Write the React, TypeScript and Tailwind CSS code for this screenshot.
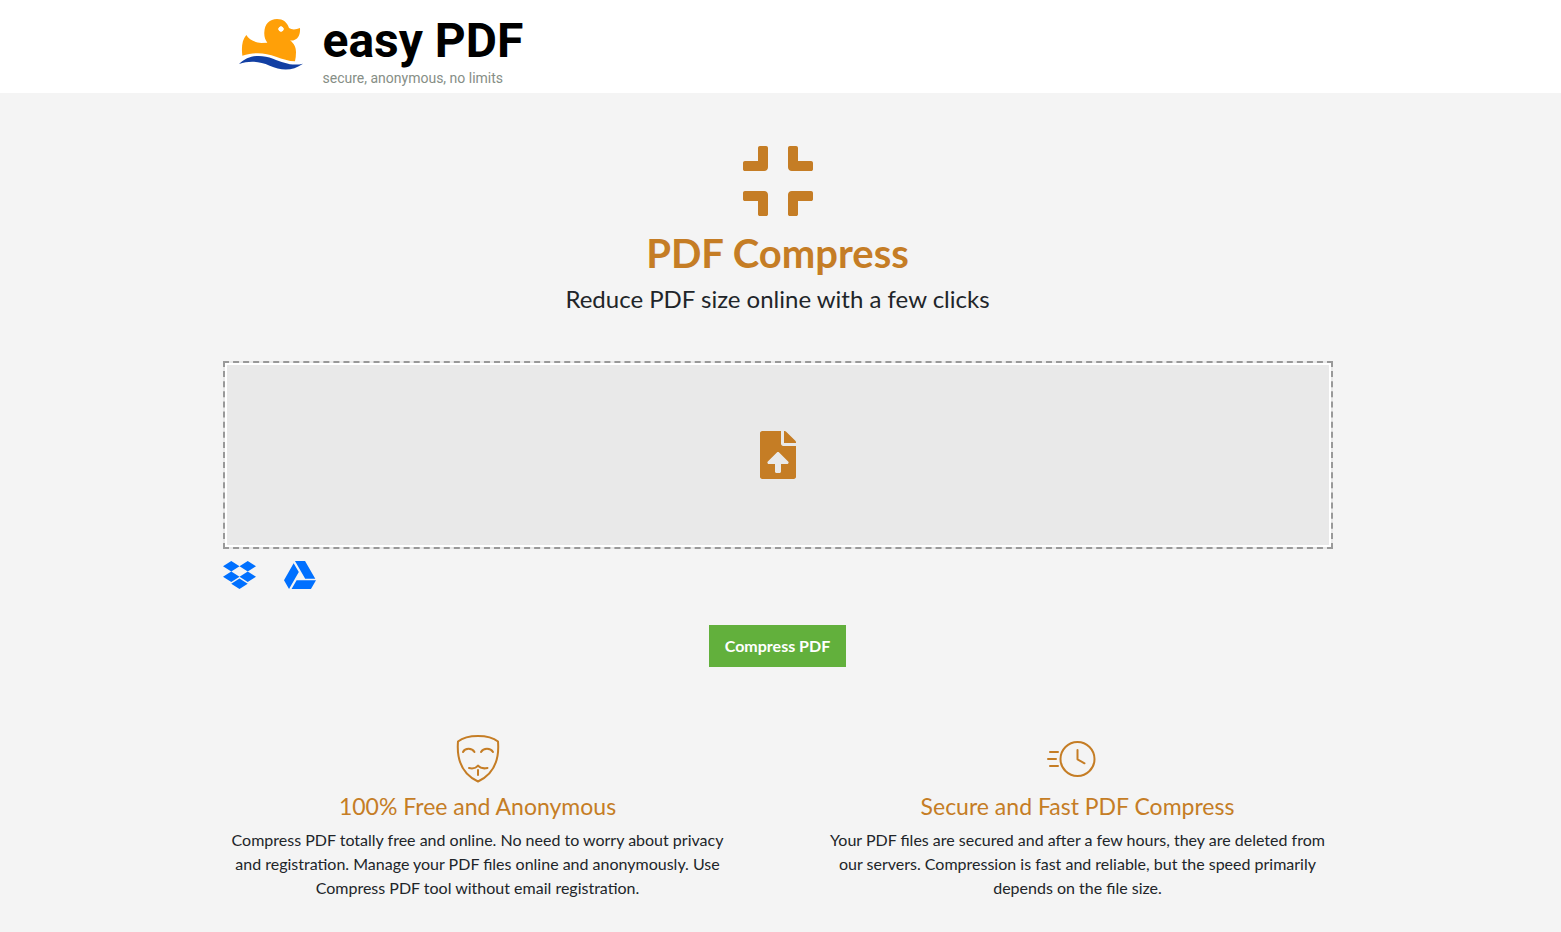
import type { ReactNode } from "react";
import {
  FaCompress,
  FaDropbox,
  FaFileUpload,
  FaGoogleDrive,
} from "react-icons/fa";

type Feature = {
  icon: ReactNode;
  title: string;
  text: string;
};

function DuckLogo() {
  return (
    <svg viewBox="21 27 192 153" className="h-[51px] w-16" aria-hidden="true">
      <path
        fill="#ffa008"
        d="M43 75 C50 88 70 98 88 99 L106 98 C99 89 96 79 97 66 C98 42 113 27 135 27 C153 27 166 37 171 54 C180 60 192 59 204 54 C205 70 201 85 187 90 C183 92 178 92 174 91 C187 102 192 112 192 127 C192 137 191 146 189 154 C170 153 152 147 132 140 C98 127 66 126 31 137 C28 112 30 89 43 75 Z"
      />
      <path fill="#fff" d="M147 48 L156 57 L147 66 L138 57 Z" />
      <circle cx="147" cy="57" r="7.5" fill="#fff" />
      <path
        fill="#123fa3"
        d="M21 162 C50 133 88 133 123 146 C155 158 180 169 213 161 C181 184 147 182 113 167 C82 154 54 151 21 162 Z"
      />
    </svg>
  );
}

function MaskIcon() {
  return (
    <svg
      viewBox="0 0 48 48"
      className="size-12"
      fill="none"
      stroke="currentColor"
      strokeWidth="2"
      strokeLinecap="round"
      strokeLinejoin="round"
      aria-hidden="true"
    >
      <path d="M24 1 C32 1 39 2.500 44 6.500 C45.500 25 39 39.500 24 46.500 C9 39.500 2.500 25 4 6.500 C9 2.500 16 1 24 1 Z" />
      <path d="M9 17 C11 12.800 18 12.800 20.500 17" />
      <path d="M27 17 C29.500 12.800 36.500 12.800 39 17" />
      <path d="M15 33 C19 34 22 33 24 30.500 C26 33 29 34 33.500 33" />
      <path d="M24 35 V40" />
    </svg>
  );
}

function FastClockIcon() {
  return (
    <svg
      viewBox="0 0 64 48"
      className="h-12 w-16"
      fill="none"
      stroke="currentColor"
      strokeWidth="2"
      strokeLinecap="round"
      strokeLinejoin="round"
      aria-hidden="true"
    >
      <circle cx="31.500" cy="24" r="17" />
      <path d="M31.500 15 V24.300 L38.500 28.300" />
      <path d="M4 17 H12 M2 24 H10 M4 31 H12" />
    </svg>
  );
}

const features: Feature[] = [
  {
    icon: <MaskIcon />,
    title: "100% Free and Anonymous",
    text: "Compress PDF totally free and online. No need to worry about privacy and registration. Manage your PDF files online and anonymously. Use Compress PDF tool without email registration.",
  },
  {
    icon: <FastClockIcon />,
    title: "Secure and Fast PDF Compress",
    text: "Your PDF files are secured and after a few hours, they are deleted from our servers. Compression is fast and reliable, but the speed primarily depends on the file size.",
  },
];

function Header() {
  return (
    <header className="bg-white pr-[6px]">
      <div className="mx-auto flex max-w-[1110px] items-start px-4 pt-[15px] pb-[5px]">
        <a href="/" className="flex items-start gap-5 font-['Roboto',sans-serif]">
          <span className="pt-1">
            <DuckLogo />
          </span>
          <span className="flex flex-col gap-px">
            <span className="text-5xl leading-[52px] font-bold text-black">
              easy PDF
            </span>
            <span className="text-sm leading-5 text-[#868e86]">
              secure, anonymous, no limits
            </span>
          </span>
        </a>
      </div>
    </header>
  );
}

function UploadArea() {
  return (
    <div>
      <label className="flex h-[188px] cursor-pointer items-center justify-center border-2 border-dashed border-[#999] bg-[#e9e9e9] text-[#c57d25] inset-ring-2 inset-ring-white">
        <input
          type="file"
          accept="application/pdf"
          aria-label="Choose PDF files"
          className="sr-only"
        />
        <FaFileUpload className="size-12" />
      </label>
      <div className="mt-[10px] flex gap-7 text-[#0070ff]">
        <button type="button" aria-label="Dropbox" className="cursor-pointer">
          <FaDropbox className="h-8 w-[33px]" />
        </button>
        <button type="button" aria-label="Google Drive" className="cursor-pointer">
          <FaGoogleDrive className="size-8" />
        </button>
      </div>
    </div>
  );
}

export default function App() {
  return (
    <div className="min-h-screen bg-[#f4f4f4] font-['Lato',sans-serif] text-[#212529]">
      <Header />

      <main className="pr-[6px] pb-8">
        <div className="mx-auto max-w-[1110px]">
          <div className="flex flex-col items-center pt-12 pb-[46px] text-center">
            <FaCompress className="size-20 text-[#c57d25]" />
            <h1 className="mt-2 text-[40px] leading-[48px] font-bold text-[#c57d25]">
              PDF Compress
            </h1>
            <p className="mt-[6px] text-2xl leading-8">
              Reduce PDF size online with a few clicks
            </p>
          </div>

          <UploadArea />

          <div className="mt-[34px] flex justify-center">
            <button
              type="button"
              className="cursor-pointer bg-[#62b03c] px-4 py-[9px] text-base leading-6 font-bold text-white"
            >
              Compress PDF
            </button>
          </div>

          <div className="mt-[68px] grid grid-cols-2 gap-[90px]">
            {features.map((feature) => (
              <section
                key={feature.title}
                className="flex flex-col items-center text-center"
              >
                <div className="text-[#c57d25]">{feature.icon}</div>
                <h2 className="mt-[7px] text-[23px] leading-8 text-[#c57d25]">
                  {feature.title}
                </h2>
                <p className="mt-[6px] text-base leading-6">{feature.text}</p>
              </section>
            ))}
          </div>
        </div>
      </main>
    </div>
  );
}
